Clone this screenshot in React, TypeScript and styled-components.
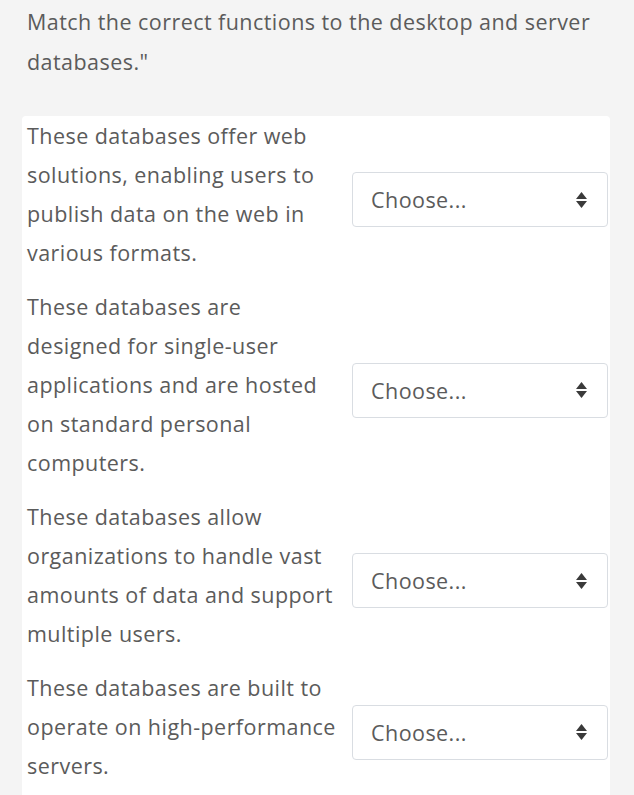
import React from "react";
import styled, { createGlobalStyle } from "styled-components";

const Global = createGlobalStyle`
  html, body { margin: 0; padding: 0; }
  body {
    background: #f4f4f4;
    font-family: "Open Sans", "Noto Sans", sans-serif;
    color: #5b5b5b;
  }
`;

const Page = styled.div`
  width: 634px;
  height: 795px;
  overflow: hidden;
  background: #f4f4f4;
`;

const Title = styled.p`
  margin: 2px 0 0 27px;
  width: 590px;
  font-size: 21.5px;
  letter-spacing: 0.45px;
  line-height: 40px;
`;

const Panel = styled.div`
  margin: 34px 0 0 22px;
  width: 588px;
  background: #ffffff;
  border-radius: 4px;
  padding: 0 0 30px 5px;
  box-sizing: border-box;
  display: flex;
  flex-direction: column;
  gap: 15px;
`;

const Row = styled.div`
  display: grid;
  grid-template-columns: 312px 256px;
  column-gap: 13px;
  align-items: center;
`;

const Prompt = styled.div`
  font-size: 21.5px;
  letter-spacing: 0.45px;
  line-height: 39px;
`;

const SelectBox = styled.div`
  margin-top: 11px;
  height: 55px;
  box-sizing: border-box;
  border: 1px solid #d9dde2;
  border-radius: 4px;
  display: flex;
  align-items: center;
  justify-content: space-between;
  padding: 0 20px 0 18px;
  font-size: 21.5px;
  letter-spacing: 0.45px;
  color: #5b5b5b;
  background: #fff;
`;

const Arrows = () => (
  <svg width="11" height="16" viewBox="0 0 11 16">
    <polygon points="0,7 5.5,0 11,7" fill="#3a3a3a" />
    <polygon points="0,9 5.5,16 11,9" fill="#3a3a3a" />
  </svg>
);

const items = [
  "These databases offer web solutions, enabling users to publish data on the web in various formats.",
  "These databases are designed for single-user applications and are hosted on standard personal computers.",
  "These databases allow organizations to handle vast amounts of data and support multiple users.",
  "These databases are built to operate on high-performance servers.",
];

export default function App() {
  return (
    <Page>
      <Global />
      <Title>Match the correct functions to the desktop and server databases."</Title>
      <Panel>
        {items.map((t) => (
          <Row key={t}>
            <Prompt>{t}</Prompt>
            <SelectBox>
              <span>Choose...</span>
              <Arrows />
            </SelectBox>
          </Row>
        ))}
      </Panel>
    </Page>
  );
}
